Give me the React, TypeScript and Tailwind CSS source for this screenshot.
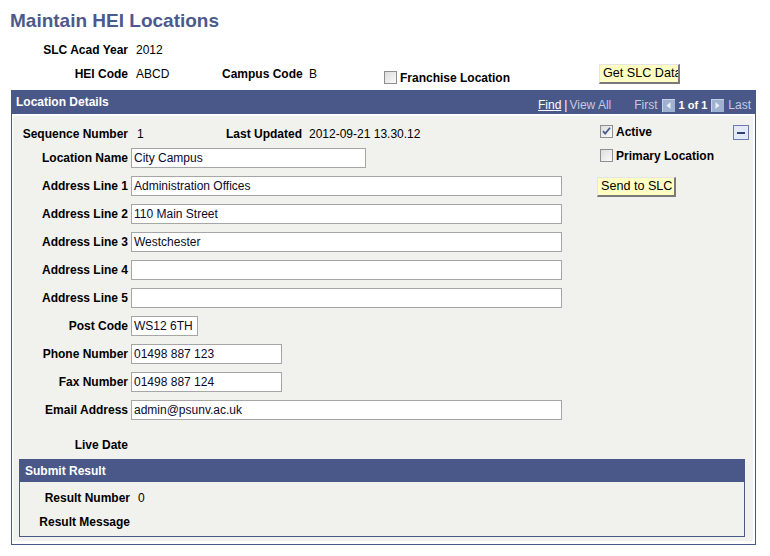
import React from "react";

const FONT = { fontFamily: '"Liberation Sans", Arial, sans-serif' };

function Check({ checked = false }: { checked?: boolean }) {
  return (
    <svg width="13" height="13" viewBox="0 0 13 13" className="shrink-0">
      <defs>
        <linearGradient id="cbg" x1="0" y1="0" x2="1" y2="1">
          <stop offset="0" stopColor="#dcdcdc" />
          <stop offset="1" stopColor="#fbfbfb" />
        </linearGradient>
      </defs>
      <rect x="0.5" y="0.5" width="12" height="12" fill="url(#cbg)" stroke="#8e8f8f" />
      {checked && (
        <path d="M3 6.2 L5.2 8.6 L10 2.8" fill="none" stroke="#4a5d8f" strokeWidth="1.8" />
      )}
    </svg>
  );
}

function NavArrow({ dir }: { dir: "left" | "right" }) {
  return (
    <svg width="13" height="13" viewBox="0 0 13 13" className="shrink-0">
      <rect x="0" y="0" width="13" height="13" fill="#9fb2d1" />
      <rect x="0" y="0" width="13" height="1" fill="#c4d1e6" />
      <rect x="0" y="0" width="1" height="13" fill="#c4d1e6" />
      {dir === "left" ? (
        <path d="M8.5 3 L4.5 6.5 L8.5 10 Z" fill="#e9eef7" />
      ) : (
        <path d="M4.5 3 L8.5 6.5 L4.5 10 Z" fill="#e9eef7" />
      )}
    </svg>
  );
}

function YellowButton({ label, width }: { label: string; width: string }) {
  return (
    <button
      type="button"
      className={`h-[20px] ${width} overflow-hidden whitespace-nowrap border-t border-l border-t-[#e4e4e4] border-l-[#e4e4e4] border-r-2 border-b-2 border-r-[#7a7a7a] border-b-[#7a7a7a] bg-[#ffffc3] pl-[3px] pr-0 text-left text-[12.6px] leading-[17px] text-black`}
    >
      {label}
    </button>
  );
}

function Field({ label, value = "", width }: { label: string; value?: string; width: string }) {
  return (
    <div className="flex h-[28px] items-center">
      <div className="w-[115px] whitespace-nowrap text-right font-bold text-black">{label}</div>
      <div
        className={`ml-[3px] h-[20px] ${width} border border-[#a6a6a6] bg-white pl-[2px] text-[12px] leading-[18px] text-[#0a0a2a]`}
      >
        {value}
      </div>
    </div>
  );
}

export default function App() {
  return (
    <div className="h-[556px] w-[770px] bg-white text-[12px] text-black" style={FONT}>
      <div className="h-[38px] pl-[10px] pt-[11px] text-[19px] font-bold leading-[20px] text-[#4b5a8c]">
        Maintain HEI Locations
      </div>

      <div className="flex h-[24px] items-center">
        <div className="w-[128px] whitespace-nowrap text-right font-bold">SLC Acad Year</div>
        <div className="ml-[8px]">2012</div>
      </div>

      <div className="flex h-[24px] items-center">
        <div className="w-[128px] whitespace-nowrap text-right font-bold">HEI Code</div>
        <div className="ml-[8px] w-[86px]">ABCD</div>
        <div className="w-[78px] whitespace-nowrap text-right font-bold">Campus Code</div>
        <div className="ml-[9px] w-[75px]">B</div>
        <div className="mt-[8px] flex items-center">
          <span className="-mt-[2px]">
            <Check />
          </span>
          <span className="ml-[3px] whitespace-nowrap font-bold">Franchise Location</span>
        </div>
        <div className="ml-[89px]">
          <YellowButton label="Get SLC Data" width="w-[81px]" />
        </div>
      </div>

      <div className="ml-[11px] mt-[4px] w-[745px] border border-[#4a5889]">
        <div className="flex h-[23px] items-center bg-[#4a5889] pl-[4px] text-white">
          <span className="mb-[2px] font-bold">Location Details</span>
          <div className="ml-auto mt-[5px] flex items-center pr-[4px] text-[#c3cadf]">
            <span className="text-white underline">Find</span>
            <span className="ml-[3px] mr-[2px] text-white">|</span>
            <span>View All</span>
            <span className="ml-[23px]">First</span>
            <span className="ml-[4px]">
              <NavArrow dir="left" />
            </span>
            <span className="ml-[4px] text-[11px] font-bold text-white">1 of 1</span>
            <span className="ml-[4px]">
              <NavArrow dir="right" />
            </span>
            <span className="ml-[4px]">Last</span>
          </div>
        </div>

        <div className="bg-white pb-[3px] pl-[1px] pr-[2px] pt-[2px]">
          <div className="bg-[#f1f1ed] pb-[4px] pt-[7px]">
            <div className="flex">
              <div className="w-[584px]">
                <div className="flex h-[21px] items-center">
                  <div className="w-[115px] whitespace-nowrap text-right font-bold">Sequence Number</div>
                  <div className="ml-[9px] w-[89px]">1</div>
                  <div className="w-[74px] whitespace-nowrap text-right font-bold">Last Updated</div>
                  <div className="ml-[9px]">2012-09-21 13.30.12</div>
                </div>
                <Field label="Location Name" value="City Campus" width="w-[235px]" />
                <Field label="Address Line 1" value="Administration Offices" width="w-[431px]" />
                <Field label="Address Line 2" value="110 Main Street" width="w-[431px]" />
                <Field label="Address Line 3" value="Westchester" width="w-[431px]" />
                <Field label="Address Line 4" width="w-[431px]" />
                <Field label="Address Line 5" width="w-[431px]" />
                <Field label="Post Code" value="WS12 6TH" width="w-[67px]" />
                <Field label="Phone Number" value="01498 887 123" width="w-[151px]" />
                <Field label="Fax Number" value="01498 887 124" width="w-[151px]" />
                <Field label="Email Address" value="admin@psunv.ac.uk" width="w-[431px]" />
              </div>

              <div className="flex-1">
                <div className="flex h-[17px] items-center">
                  <span className="ml-[3px]">
                    <Check checked />
                  </span>
                  <span className="ml-[3px] mt-[1px] font-bold">Active</span>
                  <div className="ml-auto mr-[4px] mt-[2px] flex h-[15px] w-[16px] items-center justify-center border border-[#6a7ab0] bg-[#e4eaf5]">
                    <div className="h-[2px] w-[8px] bg-[#2f417a]" />
                  </div>
                </div>
                <div className="mt-[7px] flex h-[17px] items-center">
                  <span className="ml-[3px]">
                    <Check />
                  </span>
                  <span className="ml-[3px] mt-[1px] whitespace-nowrap font-bold">Primary Location</span>
                </div>
                <div className="mt-[13px]">
                  <YellowButton label="Send to SLC" width="w-[79px]" />
                </div>
              </div>
            </div>

            <div className="mt-[7px] flex h-[28px] items-center">
              <div className="w-[115px] text-right font-bold">Live Date</div>
            </div>

            <div className="ml-[6px] mr-[8px] border border-[#4a5889]">
              <div className="flex h-[22px] items-center bg-[#4a5889] pl-[5px] font-bold text-white">
                Submit Result
              </div>
              <div className="pb-[2px] pt-[4px]">
                <div className="flex h-[24px] items-center">
                  <div className="w-[110px] whitespace-nowrap text-right font-bold">Result Number</div>
                  <div className="ml-[8px]">0</div>
                </div>
                <div className="flex h-[24px] items-center">
                  <div className="w-[110px] whitespace-nowrap text-right font-bold">Result Message</div>
                </div>
              </div>
            </div>
          </div>
        </div>
      </div>
    </div>
  );
}
